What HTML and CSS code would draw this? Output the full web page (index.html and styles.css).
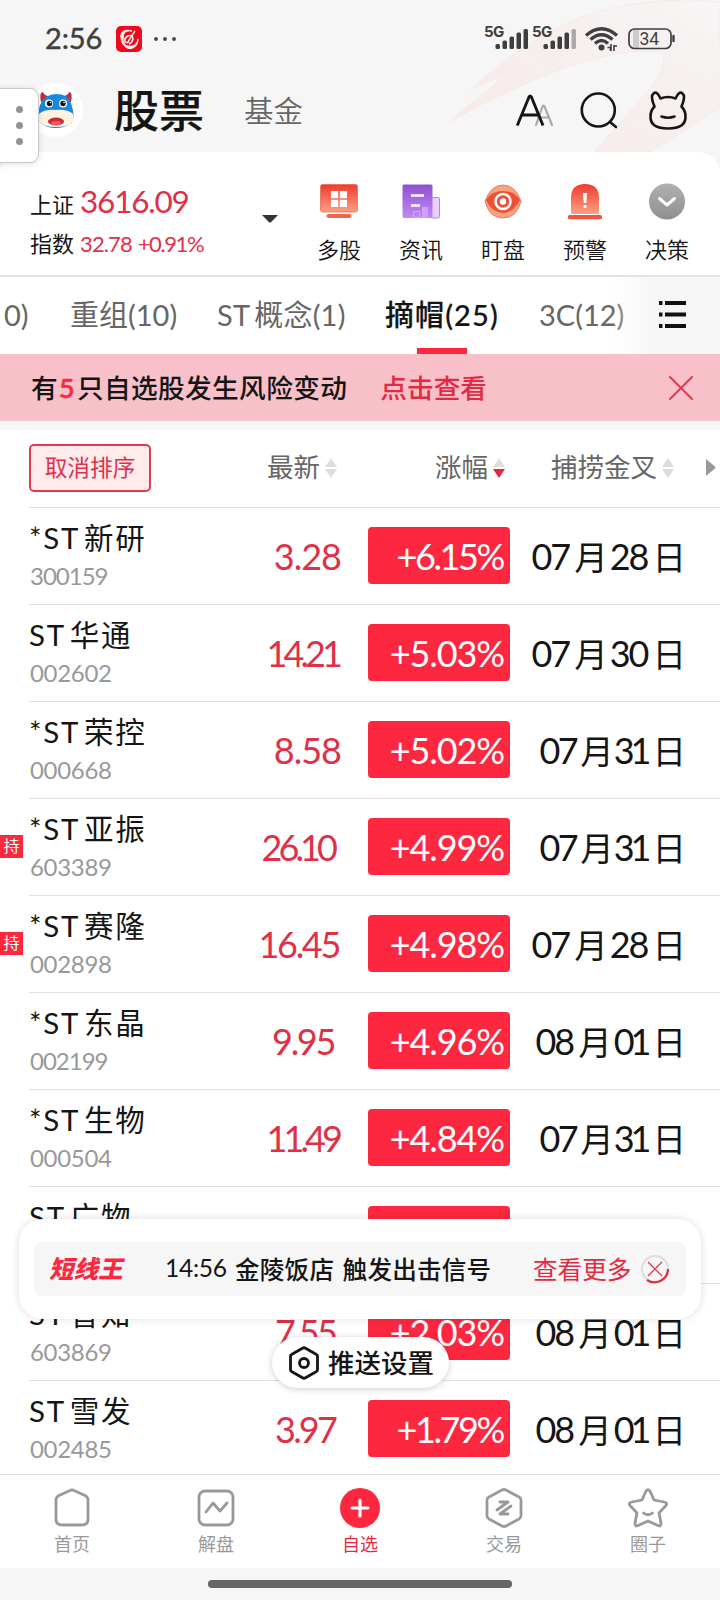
FILE: index.html
```html
<!DOCTYPE html>
<html lang="zh-CN">
<head>
<meta charset="utf-8">
<title>股票</title>
<link rel="stylesheet" href="styles.css">
</head>
<body>
<div class="app">
  <header class="top">
    <svg class="swoosh" width="280" height="152" viewBox="440 0 280 152">
      <defs><linearGradient id="sw" x1="0" y1="1" x2="1" y2="0"><stop offset="0" stop-color="#f9e8e8"/><stop offset=".6" stop-color="#f6f0ef"/><stop offset="1" stop-color="#f7f5f5"/></linearGradient></defs>
      <path d="M471 89Q560 8 650 2Q690 -2 720 2V108L650 152H594L654 84Q674 52 652 51Q610 50 553 72Q490 98 449 122L507 74Z" fill="url(#sw)" stroke="#f9e9e9"/>
    </svg>
    <div class="status">
      <span class="time">2:56</span>
      <svg class="appicon" width="26" height="26" viewBox="0 0 26 26"><rect width="26" height="26" rx="5" fill="#f0091b"/><path d="M5 11C4 5 10 3 16 5C9 4 6 8 8 13M5 10C5 17 8 20 11 22C17 24 22 20 22 13C21 19 17 21 12 20C8 19 7 16 7 13" fill="#fff" stroke="#fff"/><path d="M19 5L13 14Q12 18 9 16Q8 12 12 10Q17 8 17 13Q16 17 13 18" fill="none" stroke="#fff" stroke-width="1.4"/></svg>
      <svg class="more" width="24" height="6" viewBox="0 0 24 6" fill="#444"><circle cx="3" cy="3" r="1.9"/><circle cx="12" cy="3" r="1.9"/><circle cx="21" cy="3" r="1.9"/></svg>
      <svg class="sig" width="200" height="36" viewBox="478 20 200 36">
        <g fill="#3f3f3f"><text class="g5" x="484" y="37">5G</text><text class="g5" x="532" y="37">5G</text>
        <rect x="495.500" y="44" width="4.500" height="5" rx="1.500"/><rect x="502.500" y="40.500" width="4.500" height="8.500" rx="1.500"/><rect x="509.500" y="36.500" width="4.500" height="12.500" rx="1.500"/><rect x="516.500" y="32.500" width="4.500" height="16.500" rx="1.500"/><rect x="523.500" y="29" width="4.500" height="20" rx="1.500"/>
        <rect x="543.500" y="44" width="4.500" height="5" rx="1.500"/><rect x="550.500" y="40.500" width="4.500" height="8.500" rx="1.500"/><rect x="557.500" y="36.500" width="4.500" height="12.500" rx="1.500"/><rect x="564.500" y="32.500" width="4.500" height="16.500" rx="1.500"/><rect x="571.500" y="29" width="4.500" height="20" rx="1.500" fill="#aaa"/>
        <circle cx="601.500" cy="47.500" r="3"/></g>
        <path d="M586 35.500Q601.500 22 617 35.500M590.500 39.500Q601.500 30 612.500 39.500M595 43.500Q601.500 37.500 608 43.500" fill="none" stroke="#3f3f3f" stroke-width="3.400"/>
        <path d="M607.500 47.500h3v3.500M611 51v-7M614 45v6M614 46h3" fill="none" stroke="#3f3f3f" stroke-width="1.600"/>
        <path d="M633 30h6v18h-3q-3 0-3-3z" fill="#ccc"/><rect x="629" y="29" width="42" height="19.500" rx="5.500" fill="none" stroke="#3f3f3f" stroke-width="1.700"/><path d="M673.500 36v5" stroke="#3f3f3f" stroke-width="2.400" stroke-linecap="round"/>
        <text class="batt" x="639.500" y="45">34</text>
      </svg>
    </div>
    <div class="titlebar">
      <svg class="avatar" width="56" height="56" viewBox="0 0 56 56"><circle cx="28" cy="28" r="27" fill="#fff"/><path d="M13 20Q11 10 15 10Q16 13 20 14L18 19ZM43 20Q45 10 41 10Q40 13 36 14L38 19Z" fill="#c42b3b"/><path d="M12 23Q17 12 28 12Q40 12 43 21Q48 36 43 41Q37 46 28 46Q18 46 13 41Q8 35 12 23Z" fill="#168ae0"/><path d="M11 32Q17 27 28 28Q39 27 45 32Q48 45 28 45Q8 45 11 32Z" fill="#fff3df"/><ellipse cx="28" cy="39.500" rx="8" ry="4" fill="#c82d36"/><ellipse cx="28" cy="41" rx="5" ry="2" fill="#ef5b60"/><circle cx="21" cy="21.500" r="4" fill="#fff"/><circle cx="35" cy="21.500" r="4" fill="#fff"/><circle cx="21.500" cy="21.500" r="2.700" fill="#111"/><circle cx="35" cy="21.500" r="2.700" fill="#111"/><circle cx="22.500" cy="20.500" r=".8" fill="#fff"/><circle cx="36" cy="20.500" r=".8" fill="#fff"/></svg>
      <h1>股票</h1><span class="fund">基金</span>
      <svg class="tools" width="176" height="44" viewBox="514 88 176 44" fill="none" stroke="#151515" stroke-width="2.600" stroke-linecap="round" stroke-linejoin="round">
        <path d="M538 117.500h10M536 125L542.500 106.500Q543.500 104.500 544.500 106.500L552 125" stroke="#aaa" stroke-width="2.200"/><path d="M517.300 125.500L529 97Q530.200 95 531.400 97L543 125.500M522 115h17" stroke-linecap="butt" stroke-width="2.900"/>
        <circle cx="598.300" cy="110" r="16.500"/><path d="M610 122l6 5"/>
        <path d="M654.500 106.500Q650 96 653.500 93.500Q657 90.500 660.500 98.500Q668 95.500 675.500 98.500Q679 90.500 682.500 93.500Q686 96 681.500 106.500Q685.800 111 685.500 117Q685.500 128.500 668 128.500Q650.500 128.500 650.500 117Q650.200 111 654.500 106.500ZM661.500 116.500Q668 119 674.500 116.500"/>
      </svg>
    </div>
    <div class="handle"><i></i><i></i><i></i></div>
  </header>

  <section class="index">
    <div class="quote"><div class="q1"><span>上证</span><b>3616.09</b></div><div class="q2"><span>指数</span><b>32.78</b><b class="chg">+0.91%</b></div></div>
    <svg class="caret" width="16" height="8" viewBox="0 0 16 8"><path d="M0 0h16L9 7.200Q8 8 7 7.200Z" fill="#30343c"/></svg>
    <nav class="quick">
      <a><svg width="40" height="38" viewBox="0 0 40 38"><defs><linearGradient id="r" x1="0" y1="0" x2="0" y2="1"><stop stop-color="#ee3b2d"/><stop offset="1" stop-color="#fba184"/></linearGradient></defs><rect x="1.500" y="1.500" width="37" height="27.500" rx="2" fill="url(#r)" stroke="#e8624c" stroke-width=".7"/><rect x="7.500" y="31" width="25" height="4" rx="2" fill="#f0684c"/><path d="M12 8h7.200v7.200H12zM20.800 8H28v7.200h-7.200zM12 16.800h7.200V24H12zM20.800 16.800H28V24h-7.200z" fill="#fff"/></svg>多股</a>
      <a><svg width="40" height="38" viewBox="0 0 40 38"><defs><linearGradient id="p" x1="0" y1="0" x2="0" y2="1"><stop stop-color="#8f50d0"/><stop offset="1" stop-color="#c18af5"/></linearGradient></defs><rect x="30" y="14.500" width="8.500" height="20.500" rx="1.500" fill="#ead0ff" stroke="#b786e2"/><rect x="1.500" y="1.500" width="30" height="33.500" rx="1.500" fill="url(#p)"/><path d="M10 12.500h13M10 22.500h9" stroke="#fff" stroke-width="2.500"/><path d="M12.500 34.500v-6h6v6z" fill="none" stroke="#d3a7ff"/><path d="M21 35V24h6v11z" fill="#cfa0fb"/></svg>资讯</a>
      <a><svg width="40" height="38" viewBox="0 0 40 38"><path d="M2 18Q8 2 20 2Q32 2 38 18Q34 35 20 35Q6 35 2 18Z" fill="#f9a27e" stroke="#e36c4c" stroke-width=".8"/><path d="M3 17Q8 8 20 8Q32 8 37 17Q30 30 20 30Q8 29 3 17Z" fill="#ed5137"/><circle cx="20" cy="18.500" r="7.500" fill="none" stroke="#fff" stroke-width="2.500"/><circle cx="20" cy="18.500" r="3.200" fill="#fff"/></svg>盯盘</a>
      <a><svg width="40" height="38" viewBox="0 0 40 38"><path d="M6 31V15Q6 1 20 1Q34 1 34 15V31Z" fill="url(#r)"/><rect x="3" y="32" width="34" height="4.300" rx="1.500" fill="#ee573e"/><path d="M17.800 10h4.400l-1 10h-2.400z" fill="#fff"/><circle cx="20" cy="23.500" r="1.700" fill="#fff"/></svg>预警</a>
      <a><svg width="40" height="38" viewBox="0 0 40 38"><defs><linearGradient id="g" x1="0" y1="1" x2="0" y2="0"><stop stop-color="#8f8f8d"/><stop offset="1" stop-color="#b0b0b0"/></linearGradient></defs><circle cx="20" cy="18.500" r="18" fill="url(#g)"/><path d="M12.500 15.500l7.500 6.500l7.500-6.500" fill="none" stroke="#fff" stroke-width="3" stroke-linecap="round" stroke-linejoin="round"/></svg>决策</a>
    </nav>
  </section>

  <nav class="tabs">
    <span class="tb cut">0)</span><span class="tb t2">重组(10)</span><span class="tb t3">ST<i></i>概念(1)</span><span class="tb t4 on">摘帽(25)</span><span class="tb t5">3C(12)</span>
    <div class="fade"><svg width="29" height="29" viewBox="0 0 29 29" fill="#111"><path d="M1 1h3.500v4H1zM1 12.500h3.500v4H1zM1 24h3.500v4H1zM7 1h21v4H7zM7 12.500h21v4H7zM7 24h21v4H7z"/></svg></div>
  </nav>

  <div class="banner"><span>有<em>5</em>只自选股发生风险变动</span><span class="look">点击查看</span>
    <svg width="26" height="26" viewBox="0 0 26 26"><path d="M2 2l22 22M24 2L2 24" stroke="#e23b50" stroke-width="2" stroke-linecap="round"/></svg></div>

  <main class="table">
    <div class="thead">
      <button class="cancel">取消排序</button>
      <span class="h1c">最新<svg class="sort" width="12" height="20" viewBox="0 0 12 20" fill="#ddd"><path d="M0 9L6 0L12 9ZM0 11H12L6 20Z"/></svg></span>
      <span class="h2c">涨幅<svg class="sort" width="12" height="20" viewBox="0 0 12 20"><path d="M0 9L6 0L12 9Z" fill="#ddd"/><path d="M0 11H12L6 20Z" fill="#e3253d"/></svg></span>
      <span class="h3c">捕捞金叉<svg class="sort" width="12" height="20" viewBox="0 0 12 20" fill="#ddd"><path d="M0 9L6 0L12 9ZM0 11H12L6 20Z"/></svg></span>
      <svg class="next" width="10" height="17" viewBox="0 0 10 17"><path d="M0 0L9 7.500Q10 8.500 9 9.500L0 17Z" fill="#999"/></svg>
    </div>
    <div class="row"><div class="name"><span>*ST<i></i>新研</span><small class="tight">300159</small></div><b>3.28</b><strong class="tight">+6.15%</strong><time>07<u>月</u>28<u>日</u></time></div>
    <div class="row"><div class="name"><span>ST<i></i>华通</span><small>002602</small></div><b class="tight">14.21</b><strong>+5.03%</strong><time>07<u>月</u>30<u>日</u></time></div>
    <div class="row"><div class="name"><span>*ST<i></i>荣控</span><small>000668</small></div><b>8.58</b><strong>+5.02%</strong><time class="slim">07<u>月</u><s>31</s><u>日</u></time></div>
    <div class="row"><span class="hold">持</span><div class="name"><span>*ST<i></i>亚振</span><small>603389</small></div><b class="tight inset">26.10</b><strong>+4.99%</strong><time class="slim">07<u>月</u><s>31</s><u>日</u></time></div>
    <div class="row"><span class="hold">持</span><div class="name"><span>*ST<i></i>赛隆</span><small>002898</small></div><b class="snug">16.45</b><strong>+4.98%</strong><time>07<u>月</u>28<u>日</u></time></div>
    <div class="row"><div class="name"><span>*ST<i></i>东晶</span><small class="tight">002199</small></div><b class="snug inset">9.95</b><strong>+4.96%</strong><time>08<u>月</u><s>01</s><u>日</u></time></div>
    <div class="row"><div class="name"><span>*ST<i></i>生物</span><small>000504</small></div><b class="tight">11.49</b><strong>+4.84%</strong><time class="slim">07<u>月</u><s>31</s><u>日</u></time></div>
    <div class="row"><div class="name"><span>ST<i></i>广物</span><small></small></div><b></b><strong></strong><time></time></div>
    <div class="row"><div class="name"><span>ST<i></i>智知</span><small>603869</small></div><b class="near">7.55</b><strong>+2.03%</strong><time>08<u>月</u><s>01</s><u>日</u></time></div>
    <div class="row"><div class="name"><span>ST<i></i>雪发</span><small>002485</small></div><b class="near">3.97</b><strong class="tight">+1.79%</strong><time>08<u>月</u><s>01</s><u>日</u></time></div>
  </main>

  <div class="toast"><div class="signal"><span class="brand">短线王</span><span class="clock">14:56</span><span class="msg">金陵饭店 触发出击信号</span><span class="all">查看更多</span>
    <svg width="30" height="30" viewBox="0 0 30 30" fill="none"><circle cx="15" cy="15" r="13" stroke="#ddd" stroke-width="2"/><path d="M28 15A13.500 13.500 0 0 1 7 26" stroke="#e22b43" stroke-width="2.200"/><path d="M8 8l14 14M22 8L8 22" stroke="#e2384d" stroke-width="1.300"/></svg></div></div>
  <div class="push"><svg width="32" height="34" viewBox="0 0 32 34" fill="none" stroke="#151515" stroke-width="2.800" stroke-linejoin="round"><path d="M14.500 2.200Q16 1.300 17.500 2.200L28.500 8.500Q29.500 9 29.500 10.500V23.500Q29.500 25 28.500 25.500L17.500 31.800Q16 32.700 14.500 31.800L3.500 25.500Q2.500 25 2.500 23.500V10.500Q2.500 9 3.500 8.500Z"/><circle cx="16" cy="17" r="4.500"/></svg><span>推送设置</span></div>

  <footer class="nav">
    <a><svg width="42" height="42" viewBox="0 0 42 42"><path d="M19 3.500Q21 2.500 23 3.500L34 8.500Q37 10 37 13V32Q37 38 31 38H11Q5 38 5 32V13Q5 10 8 8.500Z"/></svg>首页</a>
    <a><svg width="42" height="42" viewBox="0 0 42 42"><rect x="4" y="4" width="34" height="34" rx="6"/><path d="M11 25l7-9l7 8l7-8" stroke-linecap="round" stroke-linejoin="round"/></svg>解盘</a>
    <a class="sel"><svg width="42" height="42" viewBox="0 0 42 42"><circle cx="21" cy="21" r="20" fill="#fd283f" stroke="none"/><path d="M13 21h16M21 13v16" stroke="#fff" stroke-width="3.200" stroke-linecap="round"/></svg>自选</a>
    <a><svg width="42" height="42" viewBox="0 0 42 42"><path d="M19 3Q21 2 23 3L36 10Q38 11 38 13V29Q38 31 36 32L23 39Q21 40 19 39L6 32Q4 31 4 29V13Q4 11 6 10Z"/><path d="M17 15h8L14 23M28 19L17 27h8" stroke-linecap="round" stroke-linejoin="round"/></svg>交易</a>
    <a><svg width="42" height="42" viewBox="0 0 42 42"><path d="M19 4Q21 1.500 23 4L27 13L37 15Q41 16 39 18.500L32 26L34 36Q34 40 31 38.500L21 34L11 38.500Q8 40 8 36L10 26L3 18.500Q1 16 5 15L15 13Z" stroke-linejoin="round"/><path d="M16.500 26Q21 29.500 25.500 26" stroke-linecap="round"/></svg>圈子</a>
  </footer>
  <div class="gesture"><i></i></div>
</div>
</body>
</html>
```
FILE: styles.css
```css
* { box-sizing: border-box; }
body { margin: 0; font-family: Lato, "Noto Sans CJK SC", sans-serif; color: #151515; font-weight: 400; background: #f6f6f6; }
h1, b, strong, em, i, u, s, small { font: inherit; margin: 0; text-decoration: none; }
.app { width: 720px; height: 1600px; position: relative; overflow: hidden; display: flex; flex-direction: column; background: #f6f6f6; white-space: nowrap; }
svg { flex: none; display: block; }
.top { height: 152px; position: relative; flex: none; }
.swoosh { position: absolute; right: 0; top: 0; }
.status { height: 76px; display: flex; align-items: center; padding: 2px 42px 0 45px; position: relative; }
.time { font-size: 29px; width: 71px; color: #3f3f3f; -webkit-text-stroke: .4px #3f3f3f; letter-spacing: -.1px; padding-bottom: 3px; }
.more { margin-left: 11px; }
.sig { margin-left: auto; margin-bottom: 2px; }
.g5 { font: 700 15px Inter, sans-serif; letter-spacing: -.5px; }
.batt { font: 17.500px Roboto, sans-serif; fill: #3f3f3f; }
.titlebar { height: 76px; display: flex; align-items: center; padding: 0 30px 8px 28px; position: relative; }
.titlebar h1 { font-size: 45px; line-height: 60px; font-weight: 500; margin-left: 30px; padding-top: 1px; width: 130px; -webkit-text-stroke: .2px #151515; }
.fund { font-size: 29.500px; color: #666; font-weight: 350; padding-bottom: 2px; }
.tools { margin-left: auto; }
.handle { position: absolute; left: -10px; top: 88px; width: 49px; height: 75px; background: #fff; border: 1px solid #c8c8c8; border-radius: 9px; z-index: 2; box-shadow: 0 1px 6px #0002; display: flex; flex-direction: column; align-items: center; justify-content: center; gap: 9px; padding-left: 9px; }
.handle i { width: 7px; height: 7px; border-radius: 50%; background: #929292; }
.index { height: 125px; flex: none; background: #fff; border-bottom: 2px solid #e3e3e3; border-radius: 22px 22px 0 0; display: flex; padding-left: 30px; }
.quote { width: 232px; padding-top: 29px; }
.q1, .q2 { display: flex; align-items: baseline; font-size: 22px; line-height: 40px; }
.q1 { height: 43px; }
.q1 b { font-size: 31.500px; color: #de3148; margin-left: 6px; letter-spacing: -1.200px; }
.q2 b { font-size: 22px; color: #de3148; margin-left: 6px; letter-spacing: -.9px; }
.q2 .chg { margin-left: 6px; letter-spacing: -1.400px; }
.caret { margin-top: 63px; }
.quick { display: flex; margin-left: 20px; }
.quick a { width: 82px; display: flex; flex-direction: column; align-items: center; font-size: 22px; font-weight: 350; line-height: 32px; padding-top: 31px; gap: 13px; }
.tabs { height: 77px; flex: none; background: #fff; display: flex; position: relative; font-size: 29px; line-height: 76px; color: #666; padding-left: 4px; }
.tb { height: 77px; letter-spacing: 0; }
.tb i, .name i { display: inline-block; width: 4px; }
.cut { width: 66px; } .t2 { width: 147px; } .t3 { width: 168px; letter-spacing: .2px; } .t4 { width: 154px; }
.on { color: #151515; font-weight: 500; position: relative; letter-spacing: 1.100px; -webkit-text-stroke: .2px #151515; }
.on::after { content: ""; position: absolute; left: 32px; bottom: 0; width: 50px; height: 6px; background: #fd283f; }
.fade { position: absolute; right: 0; top: 0; width: 110px; height: 77px; background: linear-gradient(90deg, #f6f6f600, #f6f6f6 45px); display: flex; align-items: center; padding: 0 0 2px 48px; }
.banner { height: 67px; flex: none; background: #f8c1c9; display: flex; align-items: center; padding: 0 26px 0 31px; font-size: 26.700px; font-weight: 500; }
.banner span { padding-bottom: 2px; letter-spacing: .35px; }
.banner em { color: #fd283f; padding: 0 2px 0 1px; -webkit-text-stroke: .7px #fd283f; }
.banner .look { color: #e22b43; margin-left: 33px; letter-spacing: 0; }
.banner svg { margin-left: auto; }
.table { margin-top: 9px; background: #fff; height: 1044px; overflow: hidden; flex: none; }
.thead { height: 78px; margin-left: 29px; border-bottom: 1px solid #e0e0e0; display: flex; align-items: center; color: #666; font-size: 26.500px; padding-bottom: 2px; }
.cancel { width: 122px; height: 48px; border: 2px solid #e23b50; border-radius: 5px; background: #ffeaec; color: #de3148; font: 22.700px/40px "Noto Sans CJK SC", sans-serif; padding: 0 0 1px; }
.thead span { display: flex; align-items: center; gap: 5px; line-height: 36px; padding-bottom: 2px; }
.thead .sort { margin-top: 2px; }
.h1c { width: 168px; margin-left: 116px; } .h2c { width: 116px; } .h3c { width: 155px; }
.row { height: 97px; margin-left: 29px; border-bottom: 1px solid #e0e0e0; display: grid; grid-template-columns: 171px 142px 142px 174px; column-gap: 0; position: relative; align-items: start; }
.name { padding-top: 12px; display: flex; flex-direction: column; gap: 6px; font-size: 29.500px; line-height: 36px; }
.name span { height: 36px; letter-spacing: 1.700px; }
.name small { font-size: 24px; line-height: 28px; height: 28px; color: #999; letter-spacing: -.3px; padding-left: 1px; }
.name small.tight { letter-spacing: -1px; }
.row b { margin-top: 19px; line-height: 58px; text-align: right; font-size: 36px; color: #de3148; letter-spacing: -1px; padding-right: 1px; }
.row b.snug { letter-spacing: -2.300px; padding-right: 3px; }
.row b.tight { letter-spacing: -3.900px; padding-right: 3px; }
.row b.near { letter-spacing: -2.800px; padding-right: 7px; }
.row b.inset { padding-right: 8px; }
.row strong { margin: 19px 0 0 26px; width: 142px; height: 57px; background: #fd283f; border-radius: 4px; color: #fff; font-size: 36px; line-height: 58px; text-align: right; padding-right: 6px; letter-spacing: -1.100px; }
.row strong.tight { letter-spacing: -2.400px; padding-right: 7px; }
.row time { margin: 19px -28px 0 0; line-height: 58px; font-size: 36px; letter-spacing: -2px; text-align: right; }
.row time u { font-size: 33.500px; letter-spacing: 0; margin: 0 2px 0 5px; }
.row time s { letter-spacing: -4px; }
.row time u:last-child { margin: 0 0 0 5px; }
.row time.slim { letter-spacing: -2.500px; }
.row time.slim u:first-of-type { margin: 0 0 0 4px; }
.hold { position: absolute; left: -29px; top: 36px; width: 23px; height: 23px; background: #fd283f; color: #fff; font-size: 16px; line-height: 22px; text-align: center; }
.toast { position: absolute; left: 19px; top: 1219px; width: 682px; height: 100px; border-radius: 24px; background: #fff; box-shadow: 0 0 8px #0002; padding: 23px 15px; }
.signal { height: 54px; background: #f6f6f6; border-radius: 8px; display: flex; align-items: center; font-size: 24.600px; padding-left: 15px; }
.signal span { padding-bottom: 3px; }
.brand { color: #fd283f; font-weight: 900; font-style: italic; width: 116px; font-size: 24.500px; }
.clock { width: 70px; letter-spacing: -.3px; }
.msg { font-weight: 500; width: 298px; word-spacing: 2px; letter-spacing: .2px; }
.all { color: #e22b43; width: 107px; }
.push { position: absolute; left: 272px; top: 1337px; width: 177px; height: 51px; border-radius: 26px; background: #fff; box-shadow: 0 1px 7px #0003; display: flex; align-items: center; gap: 8px; padding-left: 16px; font-size: 26.500px; font-weight: 500; }
.push span { padding-bottom: 3px; }
.nav { height: 94px; flex: none; background: #fff; border-top: 1px solid #e0e0e0; display: flex; }
.nav a { width: 144px; display: flex; flex-direction: column; align-items: center; padding-top: 12px; color: #999; font-size: 18px; line-height: 24px; gap: 3px; }
.nav svg { fill: none; stroke: #999; stroke-width: 2.800; }
.nav .sel { color: #e22b43; }
.gesture { height: 32px; flex: none; padding-top: 12px; }
.gesture i { display: block; width: 304px; height: 8px; border-radius: 4px; background: #666; margin: 0 auto; }
```
